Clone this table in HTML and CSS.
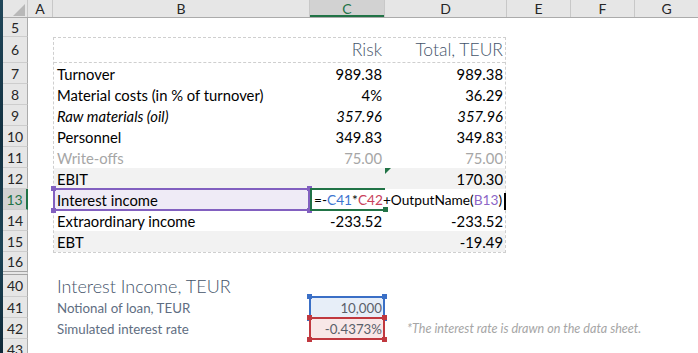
FILE: index.html
```html
<!DOCTYPE html>
<html>
<head>
  <title>P&L – Interest income</title>
  <link rel="stylesheet" href="styles.css">
</head>
<body>
  <div class="window">
    <div class="desk"></div>
    <div class="sheet">

      <div class="col-heads">
        <div class="ch corner"><span class="corner-tri"></span></div>
        <div class="ch w-a">A</div>
        <div class="ch w-b">B</div>
        <div class="ch w-c sel">C</div>
        <div class="ch w-d">D</div>
        <div class="ch w-e">E</div>
        <div class="ch w-e">F</div>
        <div class="ch w-g">G</div>
      </div>

      <div class="sheet-body">
        <div class="row-heads">
          <div class="rh h19">5</div>
          <div class="rh h26">6</div>
          <div class="rh">7</div>
          <div class="rh">8</div>
          <div class="rh">9</div>
          <div class="rh">10</div>
          <div class="rh">11</div>
          <div class="rh">12</div>
          <div class="rh sel">13</div>
          <div class="rh">14</div>
          <div class="rh">15</div>
          <div class="rh hidden-after">16</div>
          <div class="rh h22">40</div>
          <div class="rh">41</div>
          <div class="rh">42</div>
          <div class="rh">43</div>
        </div>

        <div class="cells">
          <div class="spacer h19"></div>

          <div class="report">
            <div class="line head">
              <div class="c-b"></div>
              <div class="c-num">Risk</div>
              <div class="c-num">Total, TEUR</div>
            </div>
            <div class="line">
              <div class="c-b">Turnover</div>
              <div class="c-num">989.38</div>
              <div class="c-num">989.38</div>
            </div>
            <div class="line">
              <div class="c-b">Material costs (in % of turnover)</div>
              <div class="c-num">4%</div>
              <div class="c-num">36.29</div>
            </div>
            <div class="line italic">
              <div class="c-b">Raw materials (oil)</div>
              <div class="c-num">357.96</div>
              <div class="c-num">357.96</div>
            </div>
            <div class="line">
              <div class="c-b">Personnel</div>
              <div class="c-num">349.83</div>
              <div class="c-num">349.83</div>
            </div>
            <div class="line muted">
              <div class="c-b">Write-offs</div>
              <div class="c-num">75.00</div>
              <div class="c-num">75.00</div>
            </div>
            <div class="line total">
              <div class="c-b">EBIT</div>
              <div class="c-num"></div>
              <div class="c-num flagged"><span class="err-tri"></span>170.30</div>
            </div>
            <div class="line">
              <div class="c-b picked"><span class="mark purple"></span>Interest income</div>
              <div class="c-edit"><span class="edit-box"></span>=-<span class="ref-blue">C41</span>*<span class="ref-red">C42</span>+OutputName(<span class="ref-purple">B13</span>)<span class="caret"></span></div>
              <div class="c-num"></div>
            </div>
            <div class="line">
              <div class="c-b">Extraordinary income</div>
              <div class="c-num">-233.52</div>
              <div class="c-num">-233.52</div>
            </div>
            <div class="line total last">
              <div class="c-b">EBT</div>
              <div class="c-num"></div>
              <div class="c-num">-19.49</div>
            </div>
          </div>

          <div class="spacer h22"></div>

          <div class="inputs">
            <div class="in-row title">
              <div></div>
              <div class="in-label">Interest Income, TEUR</div>
            </div>
            <div class="in-row">
              <div></div>
              <div class="in-label">Notional of loan, TEUR</div>
              <div class="in-val blue"><span class="mark blue"></span>10,000</div>
            </div>
            <div class="in-row">
              <div></div>
              <div class="in-label">Simulated interest rate</div>
              <div class="in-val red"><span class="mark red"></span>-0.4373%</div>
              <div class="note">*The interest rate is drawn on the data sheet.</div>
            </div>
          </div>
        </div>
      </div>

    </div>
  </div>
</body>
</html>
```

FILE: styles.css
```css
* {
  box-sizing: border-box;
}
body {
  margin: 0;
  width: 698px;
  height: 353px;
  overflow: hidden;
  background: #fff;
  color: #000;
  font-family: Lato, 'Noto Sans', sans-serif;
  font-size: 14.8px;
}
.window {
  display: flex;
  height: 100%;
}
.desk {
  flex: none;
  width: 3px;
  background: linear-gradient(#21475a, #123040 40%, #1d4557 70%, #0f2838);
}
.sheet {
  flex: 1;
  display: flex;
  flex-direction: column;
}

/* column headers */
.col-heads {
  display: flex;
  height: 18px;
  background: #e6e6e6;
  border-bottom: 1px solid #ababab;
}
.ch {
  display: flex;
  align-items: center;
  justify-content: center;
  border-right: 1px solid #c8c8c8;
  font-size: 14px;
  color: #262626;
}
.ch.corner {
  width: 25px;
  justify-content: flex-end;
  align-items: flex-end;
  padding: 0 2px 1px 0;
}
.corner-tri {
  border-left: 12px solid transparent;
  border-bottom: 12px solid #b8b8b8;
}
.w-a { width: 25px; }
.w-b { width: 257px; }
.w-c { width: 75px; }
.w-d { width: 122px; }
.w-e { width: 64px; }
.w-g { flex: 1; border-right: none; }
.ch.sel {
  background: #d2d2d2;
  color: #217346;
  box-shadow: inset 0 -2px #217346;
}

/* row headers */
.sheet-body {
  flex: 1;
  display: flex;
}
.row-heads {
  flex: none;
  width: 25px;
  background: #e6e6e6;
}
.rh {
  height: 21px;
  display: flex;
  align-items: center;
  justify-content: center;
  border-bottom: 1px solid #cdcdcd;
  border-right: 1px solid #ababab;
  font-size: 14px;
  color: #262626;
}
.rh.sel {
  background: #d2d2d2;
  color: #217346;
  border-right: 2px solid #217346;
}
.rh.hidden-after {
  height: 23px;
  border-bottom: 4px double #a3a3a3;
}
.h19 { height: 19px; }
.h22 { height: 22px; }
.h26 { height: 26px; }

/* sheet cells */
.cells {
  flex: 1;
  padding-left: 25px;
}
.report {
  width: 453px;
  border: 1px dashed #cfcfcf;
}
.line {
  display: grid;
  grid-template-columns: 256px 75px 120px;
  height: 21px;
  align-items: center;
}
.line.head {
  height: 25px;
  align-items: end;
  padding-bottom: 2px;
  border-bottom: 1px dashed #cfcfcf;
  font-size: 17.5px;
  font-weight: 300;
  color: #44546a;
}
.line.italic { font-style: italic; }
.line.muted { color: #a6a6a6; }
.line.total { background: #f2f2f2; }
.c-b {
  padding-left: 3px;
  white-space: nowrap;
}
.c-num {
  text-align: right;
  padding-right: 3px;
  white-space: nowrap;
}
.line .c-num:last-child {
  padding-right: 2px;
}
.c-num.flagged,
.c-b.picked,
.in-val {
  position: relative;
  height: 100%;
  display: flex;
  align-items: center;
}
.c-num.flagged {
  justify-content: flex-end;
}
.err-tri {
  position: absolute;
  left: 0;
  top: 0;
  border-top: 6px solid #217346;
  border-right: 6px solid transparent;
}

/* B13: referenced cell */
.c-b.picked {
  background: #efebf6;
}
.mark {
  position: absolute;
  inset: -1px 0 -1px -1px;
  border: 2px solid currentColor;
  pointer-events: none;
}
.mark::before {
  content: "";
  position: absolute;
  inset: -4px;
  background:
    linear-gradient(currentColor, currentColor) 0 0 / 5px 5px no-repeat,
    linear-gradient(currentColor, currentColor) 100% 0 / 5px 5px no-repeat,
    linear-gradient(currentColor, currentColor) 0 100% / 5px 5px no-repeat,
    linear-gradient(currentColor, currentColor) 100% 100% / 5px 5px no-repeat;
}
.mark.purple { color: #8260c0; }
.mark.blue { color: #3a6fc6; }
.mark.red { color: #c0383f; }

/* C13: cell in edit mode */
.c-edit {
  position: relative;
  height: 100%;
  line-height: 21px;
  padding-left: 4px;
  white-space: nowrap;
  font-size: 13.7px;
  z-index: 1;
}
.edit-box {
  position: absolute;
  left: 0;
  top: -1px;
  width: 75px;
  bottom: -1px;
  border: 2px solid #217346;
  border-right: none;
}
.edit-box::after {
  content: "";
  position: absolute;
  right: -3px;
  bottom: -3px;
  width: 5px;
  height: 5px;
  background: #217346;
}
.ref-blue { color: #3d74cf; }
.ref-red { color: #c9415a; }
.ref-purple { color: #8c66c6; }
.caret {
  display: inline-block;
  width: 2px;
  height: 17px;
  margin-left: 2px;
  vertical-align: middle;
  background: #000;
}

/* input block */
.in-row {
  display: grid;
  grid-template-columns: 4px 253px 75px auto;
  height: 21px;
  align-items: center;
  font-size: 13.3px;
  color: #5f6e82;
}
.in-row.title {
  height: 22px;
  font-size: 18px;
  font-weight: 300;
  color: #44546a;
}
.in-label {
  white-space: nowrap;
}
.in-val {
  justify-content: flex-end;
  padding-right: 3px;
  color: #5a5f6a;
}
.in-val.blue { background: #e7eef8; }
.in-val.red { background: #f8e7e7; }
.note {
  padding-left: 22px;
  font-size: 12.6px;
  font-style: italic;
  color: #a6a6a6;
  white-space: nowrap;
}
```
